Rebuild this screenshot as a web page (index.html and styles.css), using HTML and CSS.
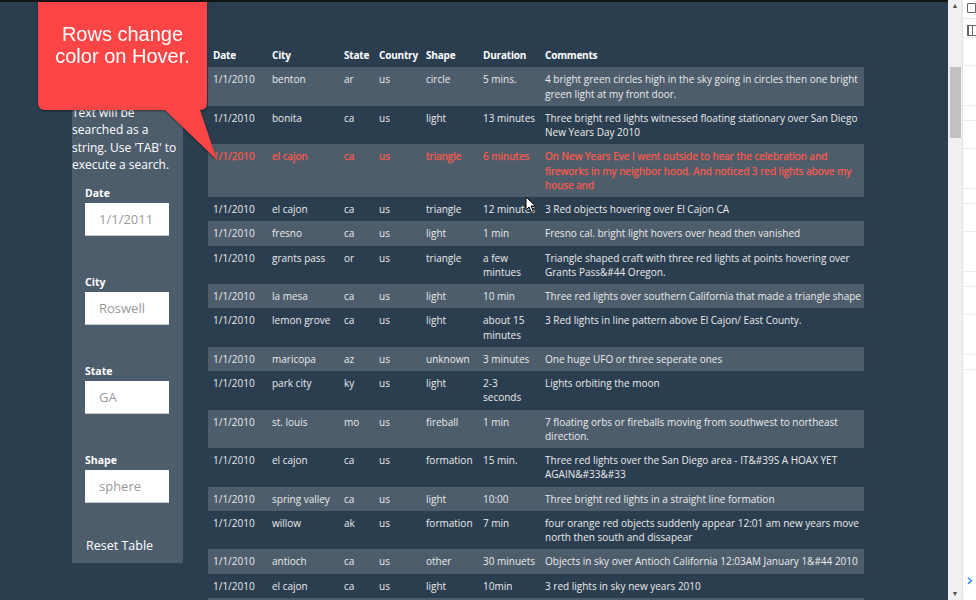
FILE: index.html
```html
<!DOCTYPE html>
<html>
<head>
<meta charset="utf-8">
<link rel="stylesheet" href="styles.css">
</head>
<body>
<div class="window">
  <div class="page">
    <aside class="sidebar">
      <p class="intro">Search the table by<br>entering values in<br>the boxes below.<br>Text will be<br>searched as a<br>string. Use 'TAB' to<br>execute a search.</p>
      <div class="field"><label>Date</label><input type="text" placeholder="1/1/2011"></div>
      <div class="field"><label>City</label><input type="text" placeholder="Roswell"></div>
      <div class="field"><label>State</label><input type="text" placeholder="GA"></div>
      <div class="field"><label>Shape</label><input type="text" placeholder="sphere"></div>
      <a class="reset">Reset Table</a>
    </aside>
    <main class="table-wrap">
      <table class="ufo">
        <colgroup>
          <col class="c-date"><col class="c-city"><col class="c-state"><col class="c-country"><col class="c-shape"><col class="c-dur"><col class="c-com">
        </colgroup>
        <thead>
          <tr><th>Date</th><th>City</th><th>State</th><th>Country</th><th>Shape</th><th>Duration</th><th>Comments</th></tr>
        </thead>
        <tbody>
          <tr><td>1/1/2010</td><td>benton</td><td>ar</td><td>us</td><td>circle</td><td>5 mins.</td><td>4 bright green circles high in the sky going in circles then one bright<br>green light at my front door.</td></tr>
          <tr><td>1/1/2010</td><td>bonita</td><td>ca</td><td>us</td><td>light</td><td>13 minutes</td><td>Three bright red lights witnessed floating stationary over San Diego<br>New Years Day 2010</td></tr>
          <tr class="hover"><td>1/1/2010</td><td>el cajon</td><td>ca</td><td>us</td><td>triangle</td><td>6 minutes</td><td>On New Years Eve I went outside to hear the celebration and<br>fireworks in my neighbor hood. And noticed 3 red lights above my<br>house and</td></tr>
          <tr><td>1/1/2010</td><td>el cajon</td><td>ca</td><td>us</td><td>triangle</td><td>12 minutes</td><td>3 Red objects hovering over El Cajon CA</td></tr>
          <tr><td>1/1/2010</td><td>fresno</td><td>ca</td><td>us</td><td>light</td><td>1 min</td><td>Fresno cal. bright light hovers over head then vanished</td></tr>
          <tr><td>1/1/2010</td><td>grants pass</td><td>or</td><td>us</td><td>triangle</td><td>a few<br>mintues</td><td>Triangle shaped craft with three red lights at points hovering over<br>Grants Pass&amp;#44 Oregon.</td></tr>
          <tr><td>1/1/2010</td><td>la mesa</td><td>ca</td><td>us</td><td>light</td><td>10 min</td><td>Three red lights over southern California that made a triangle shape</td></tr>
          <tr><td>1/1/2010</td><td>lemon grove</td><td>ca</td><td>us</td><td>light</td><td>about 15<br>minutes</td><td>3 Red lights in line pattern above El Cajon/ East County.</td></tr>
          <tr><td>1/1/2010</td><td>maricopa</td><td>az</td><td>us</td><td>unknown</td><td>3 minutes</td><td>One huge UFO or three seperate ones</td></tr>
          <tr><td>1/1/2010</td><td>park city</td><td>ky</td><td>us</td><td>light</td><td>2-3<br>seconds</td><td>Lights orbiting the moon</td></tr>
          <tr><td>1/1/2010</td><td>st. louis</td><td>mo</td><td>us</td><td>fireball</td><td>1 min</td><td>7 floating orbs or fireballs moving from southwest to northeast<br>direction.</td></tr>
          <tr><td>1/1/2010</td><td>el cajon</td><td>ca</td><td>us</td><td>formation</td><td>15 min.</td><td>Three red lights over the San Diego area - IT&amp;#39S A HOAX YET<br>AGAIN&amp;#33&amp;#33</td></tr>
          <tr><td>1/1/2010</td><td>spring valley</td><td>ca</td><td>us</td><td>light</td><td>10:00</td><td>Three bright red lights in a straight line formation</td></tr>
          <tr><td>1/1/2010</td><td>willow</td><td>ak</td><td>us</td><td>formation</td><td>7 min</td><td>four orange red objects suddenly appear 12:01 am new years move<br>north then south and dissapear</td></tr>
          <tr><td>1/1/2010</td><td>antioch</td><td>ca</td><td>us</td><td>other</td><td>30 minuets</td><td>Objects in sky over Antioch California 12:03AM January 1&amp;#44 2010</td></tr>
          <tr><td>1/1/2010</td><td>el cajon</td><td>ca</td><td>us</td><td>light</td><td>10min</td><td>3 red lights in sky new years 2010</td></tr>
          <tr class="last"><td></td><td></td><td></td><td></td><td></td><td></td><td></td></tr>
        </tbody>
      </table>
    </main>

    <div class="callout">
      <svg class="callout-shape" width="200" height="170" viewBox="0 0 200 170">
        <path d="M2 0 H171 V103 Q171 110 164 110 L181 160 L129 110 H9 Q2 110 2 103 Z" fill="#fd4545"/>
      </svg>
      <p class="callout-text">Rows change<br>color on Hover.</p>
    </div>

    <svg class="cursor" width="12" height="18" viewBox="0 0 12 18">
      <path d="M1 1 L1 14 L4 11 L6.5 16.5 L8.5 15.5 L6 10 L10.5 10 Z" fill="#fff" stroke="#000" stroke-width="1"/>
    </svg>
  </div>

  <div class="scrollbar">
    <span class="sb-arrow">&#9650;</span>
    <div class="sb-track"><div class="sb-thumb"></div></div>
    <span class="sb-arrow">&#9660;</span>
  </div>

  <div class="sidepanel">
    <div class="sp-item"><span class="sp-box"></span></div>
    <div class="sp-item"><span class="sp-cols"></span></div>
    <div class="sp-rest">
      <div class="sp-line"></div><div class="sp-line"></div><div class="sp-line"></div><div class="sp-line"></div>
      <div class="sp-line"></div><div class="sp-line"></div><div class="sp-line"></div><div class="sp-line"></div>
      <div class="sp-line"></div><div class="sp-line"></div><div class="sp-line"></div><div class="sp-line"></div>
    </div>
    <div class="sp-next">&#8250;</div>
  </div>
</div>
</body>
</html>
```

FILE: styles.css
```css
* { box-sizing: border-box; }

html, body {
  margin: 0;
  height: 600px;
  overflow: hidden;
  background: #2b3e50;
}

body {
  font-family: "Open Sans", "Noto Sans", sans-serif;
  color: #ebebeb;
}

.window {
  display: flex;
  height: 600px;
}

.page {
  flex: 0 0 948px;
  position: relative;
  display: flex;
  align-items: flex-start;
  gap: 25px;
  padding-left: 72px;
  border-top: 2px solid #141414;
  overflow: hidden;
}

/* Sidebar */
.sidebar {
  width: 111px;
  margin-top: 41px;
  background: #4e5d6c;
  padding: 8px 0 8px 0;
}

.intro {
  margin: 0 0 12px 0;
  font-size: 12px;
  line-height: 17.5px;
  color: #fff;
  white-space: nowrap;
}

.field {
  padding-left: 13px;
  margin-bottom: 38.5px;
}

.field label {
  display: block;
  font-size: 10.5px;
  font-weight: 700;
  line-height: 15px;
  margin-bottom: 2.5px;
  color: #fff;
}

.field input {
  display: block;
  width: 84px;
  height: 33px;
  border: 0;
  border-bottom: 1px solid #c8c8c8;
  background: #fff;
  padding: 0 0 0 14px;
  font-family: "Open Sans", sans-serif;
  font-size: 13px;
  color: #555;
  outline: none;
}

.field input::placeholder {
  color: #9a9a9a;
}

.reset {
  display: block;
  margin: -5px 0 0 14px;
  font-size: 12.5px;
  line-height: 18px;
  color: #fff;
}

/* Table */
.table-wrap {
  width: 656px;
  margin-top: 41px;
}

.ufo {
  width: 656px;
  border-collapse: collapse;
  table-layout: fixed;
  font-size: 10px;
  line-height: 14.25px;
}

.c-date { width: 59px; }
.c-city { width: 72px; }
.c-state { width: 35px; }
.c-country { width: 47px; }
.c-shape { width: 57px; }
.c-dur { width: 62px; }
.c-com { width: 324px; }

.ufo th {
  text-align: left;
  font-weight: 700;
  color: #fff;
  padding: 5px 5px;
  white-space: nowrap;
  letter-spacing: -0.2px;
}

.ufo td {
  vertical-align: top;
  padding: 5px 5px;
  color: #ebebeb;
  white-space: nowrap;
}

.ufo tbody tr:nth-child(odd) {
  background: #4e5d6c;
}

.ufo tbody tr.last td {
  height: 24px;
}

.ufo tbody tr.hover td {
  color: #fb5a4a;
  -webkit-text-stroke: 0.25px #fb5a4a;
}

/* Callout overlay */
.callout {
  position: absolute;
  left: 36px;
  top: -2px;
  width: 200px;
  height: 170px;
  filter: drop-shadow(0 1px 1px rgba(0, 0, 0, 0.45));
}

.callout-shape {
  display: block;
}

.callout-text {
  position: absolute;
  left: 2px;
  top: 23px;
  width: 169px;
  margin: 0;
  text-align: center;
  font-family: "Liberation Sans", Arial, sans-serif;
  font-size: 20px;
  line-height: 22px;
  color: #fff;
}

.cursor {
  position: absolute;
  left: 525px;
  top: 194px;
}

/* Scrollbar */
.scrollbar {
  flex: 0 0 15px;
  background: #f0f0f0;
  display: flex;
  flex-direction: column;
  align-items: center;
  border-right: 1px solid #e2e2e2;
}

.sb-arrow {
  font-size: 7px;
  line-height: 12px;
  height: 12px;
  color: #505050;
}

.sb-track {
  flex: 1;
  width: 100%;
  padding-top: 55px;
  display: flex;
  justify-content: center;
}

.sb-thumb {
  width: 11px;
  height: 71px;
  background: #c1c1c1;
}

/* Right side panel */
.sidepanel {
  flex: 0 0 13px;
  background: #fff;
  display: flex;
  flex-direction: column;
  overflow: hidden;
}

.sp-item {
  height: 19px;
  border-bottom: 1px solid #e6e6e6;
  padding: 3px 0 0 4px;
}

.sp-box {
  display: block;
  width: 9px;
  height: 10px;
  border: 1px solid #666;
  border-radius: 1px;
}

.sp-cols {
  display: block;
  width: 9px;
  height: 11px;
  margin-top: 3px;
  border-left: 2px solid #666;
  border-top: 1px solid #666;
  border-bottom: 1px solid #666;
  box-shadow: inset 3px 0 0 #fff, inset 4px 0 0 #666;
}

.sp-rest {
  flex: 1;
  display: flex;
  flex-direction: column;
}

.sp-line {
  height: 40px;
  border-bottom: 1px solid #ededed;
}

.sp-line:nth-child(3n) { height: 15px; }
.sp-line:nth-child(3n+1) { height: 28px; }

.sp-next {
  height: 30px;
  font-size: 18px;
  line-height: 20px;
  color: #2d7ff9;
  padding-left: 3px;
  font-family: "DejaVu Sans", sans-serif;
}
```
